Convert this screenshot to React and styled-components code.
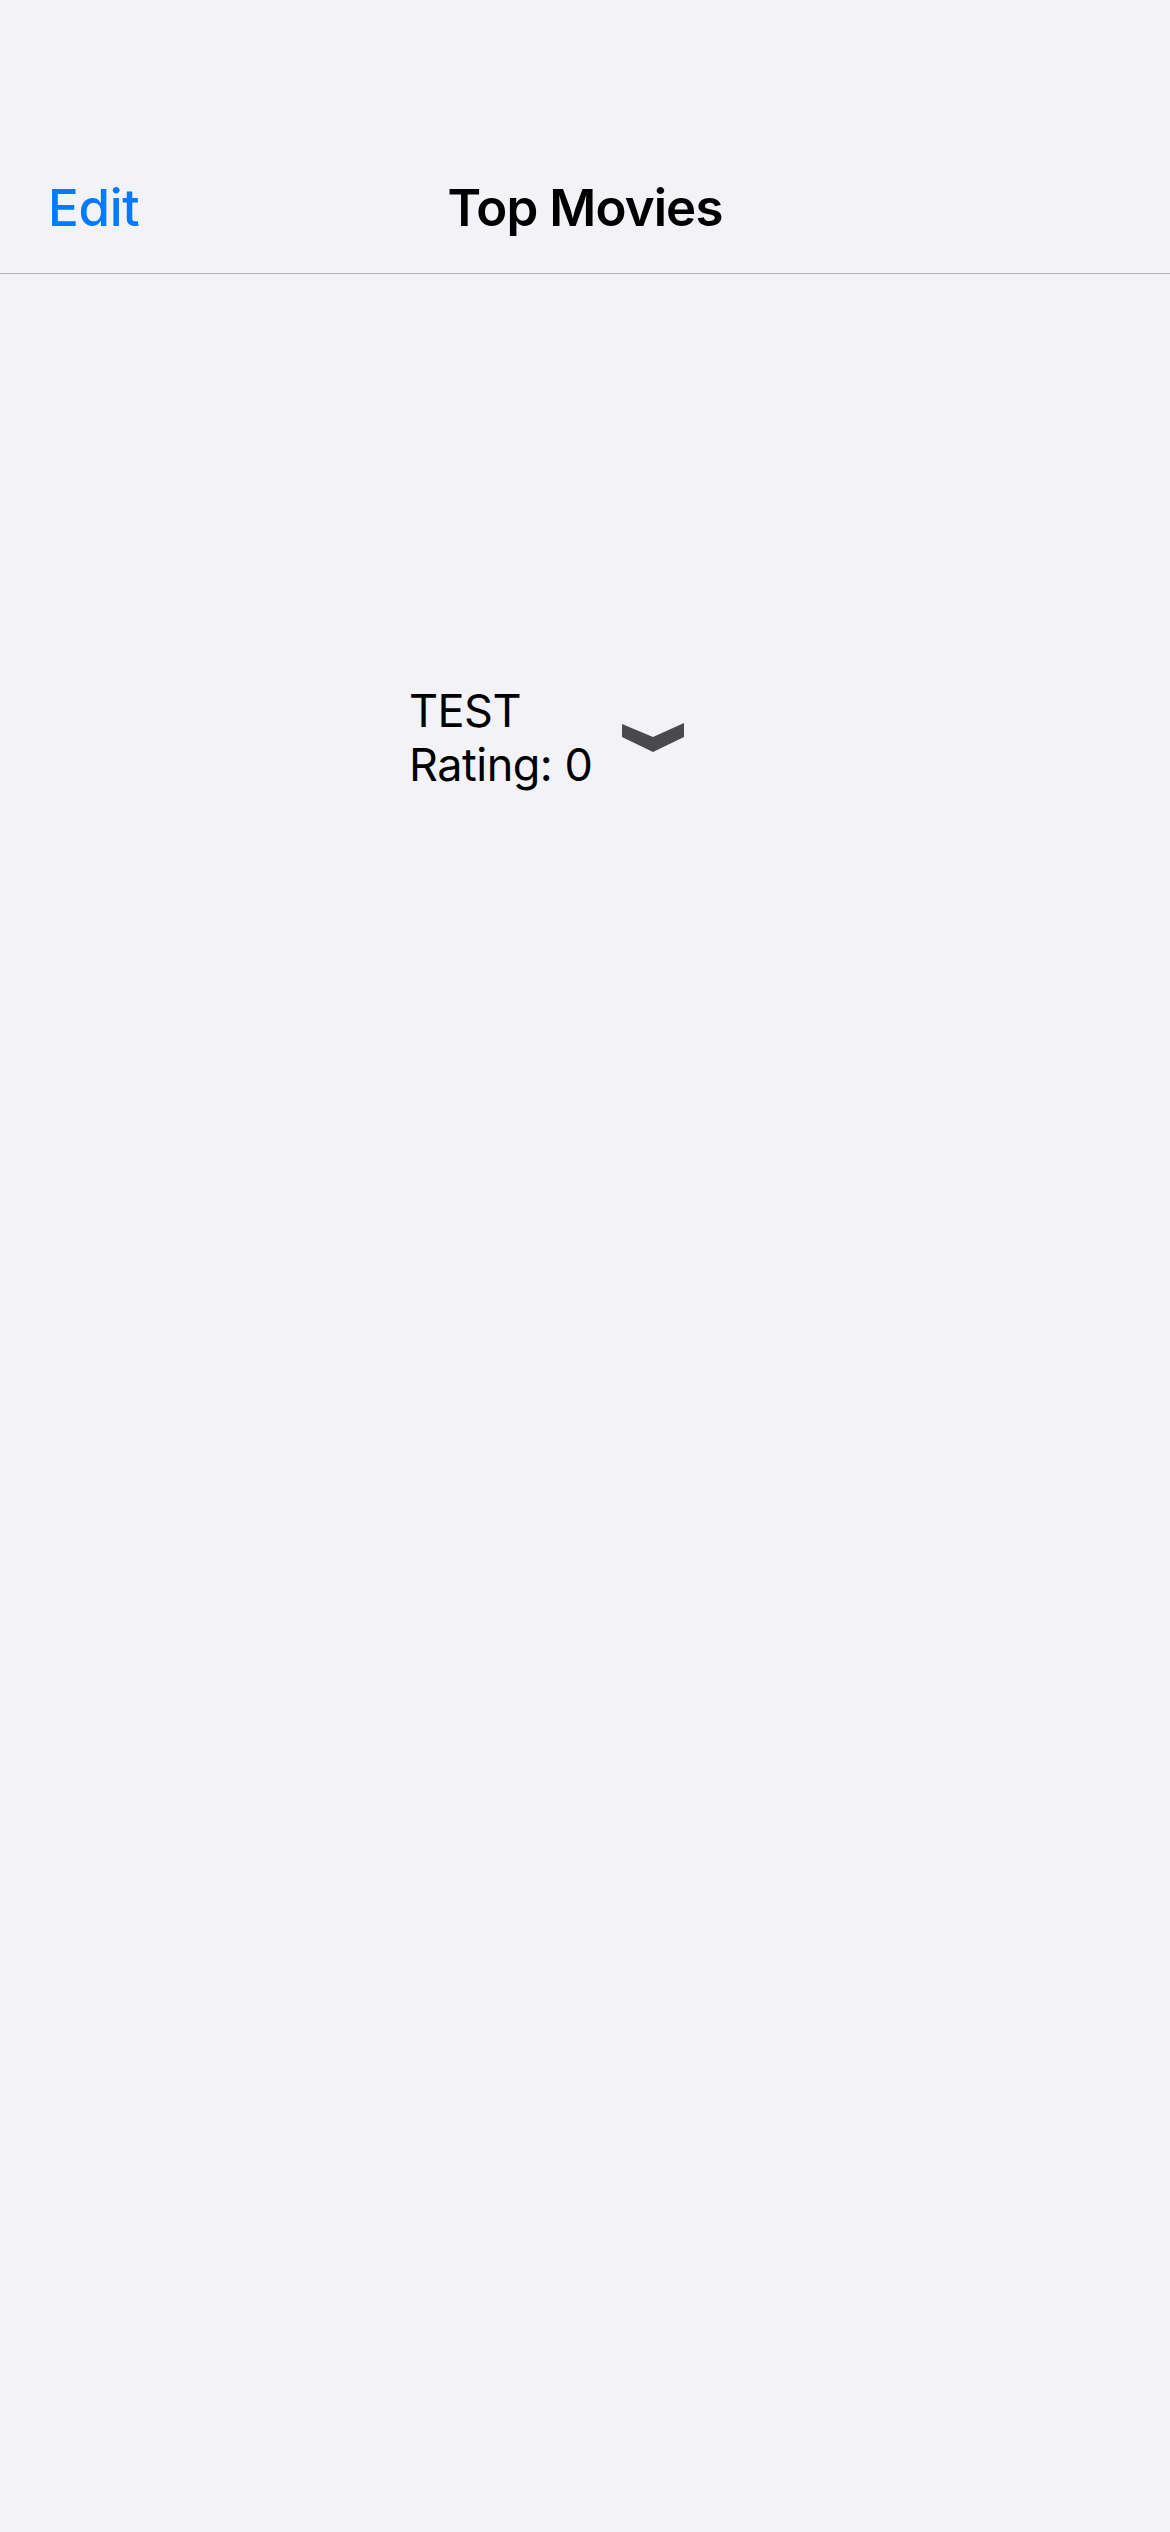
import React from 'react'
import styled, { createGlobalStyle } from 'styled-components'

const GlobalStyle = createGlobalStyle`
  html, body {
    margin: 0;
    padding: 0;
    background: #f2f2f7;
  }
  body {
    font-family: Inter, "Liberation Sans", sans-serif;
    -webkit-font-smoothing: antialiased;
  }
`

const Screen = styled.div`
  width: 1170px;
  min-height: 2532px;
  background: #f2f2f7;
`

const NavBar = styled.div`
  display: grid;
  grid-template-columns: 1fr auto 1fr;
  align-items: center;
  height: 132px;
  padding: 141px 48px 0 48px;
  border-bottom: 1px solid #b2b2b6;
`

const EditButton = styled.a`
  justify-self: start;
  color: #007aff;
  font-size: 51px;
  font-weight: 500;
  letter-spacing: -0.3px;
  cursor: pointer;
`

const Title = styled.div`
  color: #000;
  font-size: 51px;
  font-weight: 600;
  letter-spacing: -0.9px;
`

const Row = styled.div`
  display: flex;
  align-items: center;
  gap: 30px;
  padding: 410px 0 0 409px;
`

const Info = styled.div`
  display: flex;
  flex-direction: column;
  color: #000;
  font-size: 45px;
  line-height: 54px;
  letter-spacing: -0.5px;
`

const Chevron = styled.svg`
  display: block;
  width: 62px;
  height: 30px;
`

const movie = { name: 'TEST', rating: 0 }

export default function App() {
  return (
    <Screen>
      <GlobalStyle />
      <NavBar>
        <EditButton>Edit</EditButton>
        <Title>Top Movies</Title>
        <span />
      </NavBar>
      <Row>
        <Info>
          <span>{movie.name}</span>
          <span>Rating: {movie.rating}</span>
        </Info>
        <Chevron viewBox="0 0 62 30">
          <polygon points="0,1 0,14 31,29 62,14 62,0 31,14" fill="#4a4a4c" />
        </Chevron>
      </Row>
    </Screen>
  )
}
